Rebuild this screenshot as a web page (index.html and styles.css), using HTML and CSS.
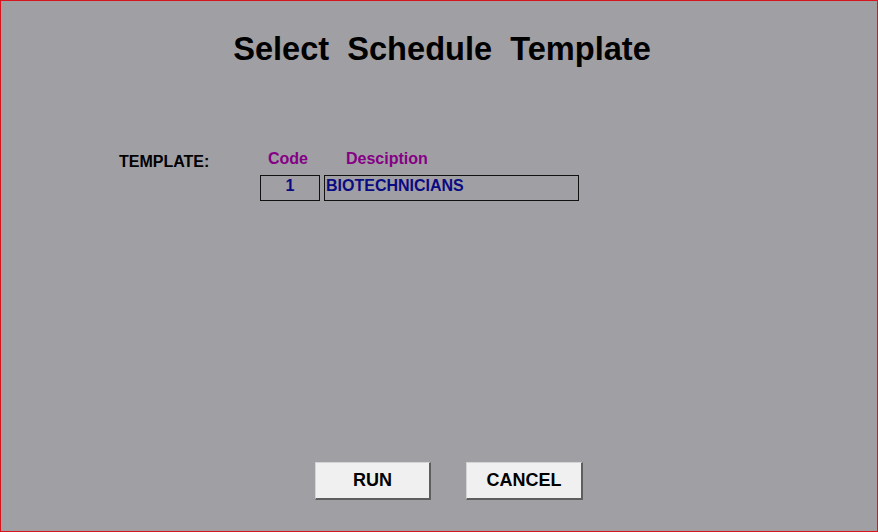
FILE: index.html
```html
<!DOCTYPE html>
<html>
<head>
<meta charset="utf-8">
<link rel="stylesheet" href="styles.css">
</head>
<body>
<div class="window">
  <h1 class="title">Select  Schedule  Template</h1>
  <div class="form">
    <div class="label">TEMPLATE:</div>
    <div class="fields">
      <div class="head head-code">Code</div>
      <div class="head head-desc">Desciption</div>
      <div class="box box-code">1</div>
      <div class="box box-desc">BIOTECHNICIANS</div>
    </div>
  </div>
  <div class="actions">
    <button class="btn">RUN</button>
    <button class="btn">CANCEL</button>
  </div>
</div>
</body>
</html>
```
FILE: styles.css
```css
html, body {
  margin: 0;
  padding: 0;
}
body {
  font-family: "Liberation Sans", Arial, sans-serif;
  font-weight: bold;
}
.window {
  width: 878px;
  height: 532px;
  box-sizing: border-box;
  border: 1px solid #d8141c;
  background: #a09fa4;
  display: flex;
  flex-direction: column;
}
.title {
  margin: 29px 0 0 0;
  padding-left: 6px;
  font-size: 32.6px;
  line-height: 37px;
  font-weight: bold;
  text-align: center;
  white-space: pre;
  color: #000;
}
.form {
  margin-top: 83px;
  padding-left: 118px;
  display: flex;
}
.label {
  width: 141px;
  margin-top: 3px;
  font-size: 16px;
  line-height: 18px;
  color: #000;
}
.fields {
  display: grid;
  grid-template-columns: 60px 255px;
  column-gap: 4px;
  row-gap: 7px;
}
.head {
  font-size: 16px;
  line-height: 18px;
  color: #850085;
}
.head-code {
  padding-left: 8px;
}
.head-desc {
  padding-left: 22px;
}
.box {
  box-sizing: border-box;
  height: 26px;
  border: 1px solid #111;
  font-size: 16px;
  line-height: 19px;
  color: #0a0a82;
}
.box-code {
  text-align: center;
}
.box-desc {
  padding-left: 1px;
}
.actions {
  margin-top: auto;
  padding: 0 0 31px 314px;
  display: flex;
  gap: 35px;
}
.btn {
  box-sizing: border-box;
  width: 116px;
  height: 38px;
  background: #f0f0f0;
  border-style: solid;
  border-width: 1px 2px 2px 1px;
  border-color: #d4d4d4 #5e5e5e #5e5e5e #d4d4d4;
  font-family: "Liberation Sans", Arial, sans-serif;
  font-weight: bold;
  font-size: 18px;
  color: #000;
  padding: 0;
}
.btn + .btn {
  width: 117px;
}
```
